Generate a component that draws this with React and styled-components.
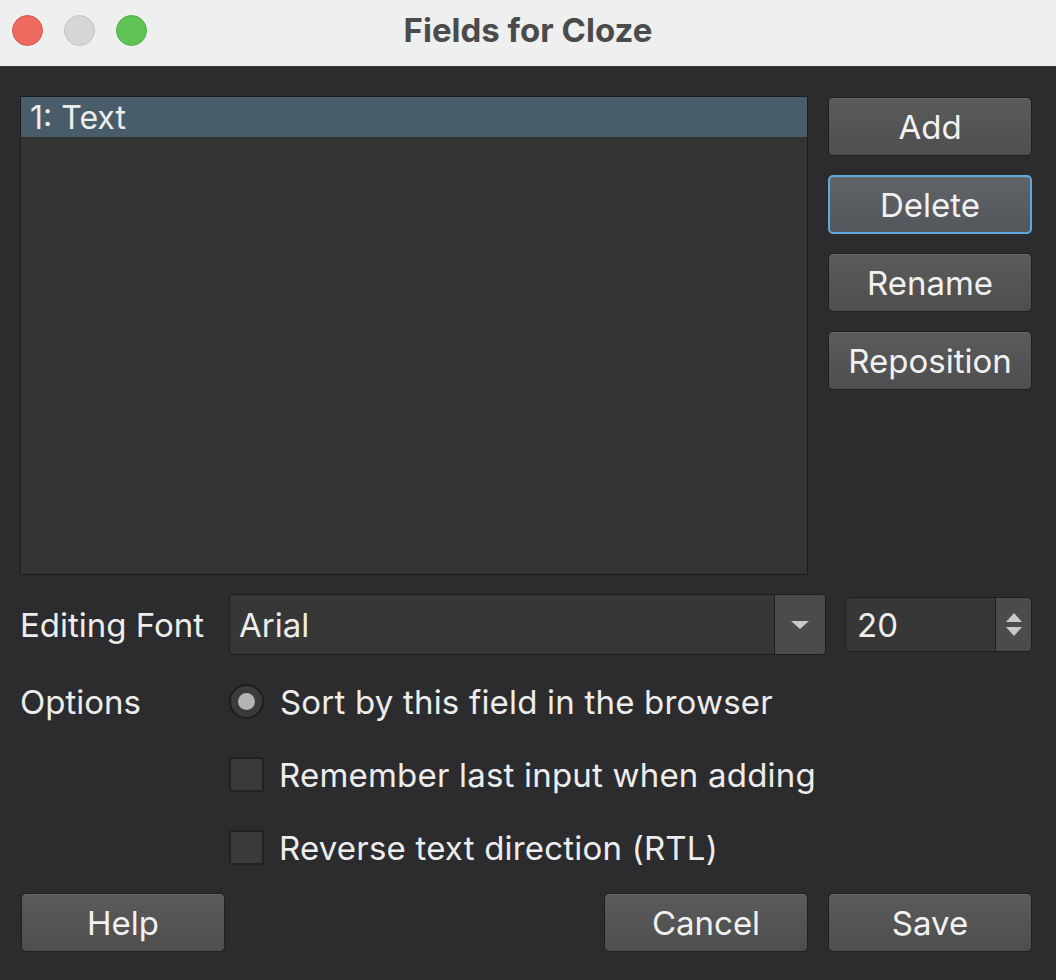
import styled, { createGlobalStyle } from 'styled-components';

const GlobalStyle = createGlobalStyle`
  html, body {
    margin: 0;
    padding: 0;
    background: #2c2c2e;
  }
  * {
    box-sizing: border-box;
  }
  body {
    font-family: Inter, "Open Sans", "Liberation Sans", sans-serif;
    color: #ededed;
  }
`;

const fields = ['1: Text'];
const sideActions = ['Add', 'Delete', 'Rename', 'Reposition'];
const options = [
  { kind: 'radio', label: 'Sort by this field in the browser' },
  { kind: 'check', label: 'Remember last input when adding' },
  { kind: 'check', label: 'Reverse text direction (RTL)' },
];

const App = () => {
  return (
    <Window>
      <GlobalStyle />
      <TitleBar>
        <Lights>
          <Light color="#ee6a5e" ring="#d5564b" />
          <Light color="#d6d6d6" ring="#c2c2c2" />
          <Light color="#5fc454" ring="#4fae45" />
        </Lights>
        <Title>Fields for Cloze</Title>
      </TitleBar>

      <Body>
        <TopSection>
          <FieldList>
            {fields.map((f) => (
              <FieldRow key={f} selected>
                {f}
              </FieldRow>
            ))}
          </FieldList>
          <SideButtons>
            {sideActions.map((a) => (
              <Button key={a} focused={a === 'Delete'}>
                {a}
              </Button>
            ))}
          </SideButtons>
        </TopSection>

        <FormGrid>
          <Label rowHeight={61}>Editing Font</Label>
          <FontControls>
            <Combo>
              <ComboValue>Arial</ComboValue>
              <ComboArrow>
                <svg width="22" height="12" viewBox="0 0 22 12">
                  <path d="M2 2 L20 2 L11 10 Z" fill="#c9c9c9" />
                </svg>
              </ComboArrow>
            </Combo>
            <Spin>
              <SpinValue>20</SpinValue>
              <SpinArrows>
                <svg width="20" height="12" viewBox="0 0 20 12">
                  <path d="M2 11 L18 11 L10 2 Z" fill="#c9c9c9" />
                </svg>
                <svg width="20" height="12" viewBox="0 0 20 12">
                  <path d="M2 1 L18 1 L10 10 Z" fill="#c9c9c9" />
                </svg>
              </SpinArrows>
            </Spin>
          </FontControls>

          <Label rowHeight={73}>Options</Label>
          <OptionList>
            {options.map((o) => (
              <OptionRow key={o.label}>
                {o.kind === 'radio' ? (
                  <Radio>
                    <RadioDot />
                  </Radio>
                ) : (
                  <Checkbox />
                )}
                <OptionText>{o.label}</OptionText>
              </OptionRow>
            ))}
          </OptionList>
        </FormGrid>

        <Footer>
          <Button>Help</Button>
          <FooterRight>
            <Button>Cancel</Button>
            <Button>Save</Button>
          </FooterRight>
        </Footer>
      </Body>
    </Window>
  );
};

const Window = styled.div`
  width: 1056px;
  height: 980px;
  display: flex;
  flex-direction: column;
  background: #2c2c2e;
`;

const TitleBar = styled.div`
  position: relative;
  height: 67px;
  flex-shrink: 0;
  background: #eeefef;
  border-bottom: 1px solid #3c3c3c;
  display: flex;
  align-items: center;
  justify-content: center;
`;

const Lights = styled.div`
  position: absolute;
  left: 12px;
  top: 15px;
  display: flex;
  gap: 21px;
`;

const Light = styled.span`
  width: 31px;
  height: 31px;
  border-radius: 50%;
  background: ${(p) => p.color};
  border: 1px solid ${(p) => p.ring};
`;

const Title = styled.div`
  font-size: 33px;
  font-weight: 700;
  color: #4b4b4b;
  margin-left: 0;
  margin-top: -7px;
  font-family: Inter, "Open Sans", "Liberation Sans", sans-serif;
`;

const Body = styled.div`
  flex: 1;
  padding: 29px 24px 0 20px;
  display: flex;
  flex-direction: column;
`;

const TopSection = styled.div`
  display: grid;
  grid-template-columns: 788px 1fr;
  gap: 20px;
  height: 479px;
`;

const FieldList = styled.div`
  background: #333334;
  border: 1px solid #1d1d1e;
  display: flex;
  flex-direction: column;
`;

const FieldRow = styled.div`
  height: 40px;
  padding-left: 9px;
  display: flex;
  align-items: center;
  font-size: 32px;
  background: ${(p) => (p.selected ? '#495c6a' : 'transparent')};
`;

const SideButtons = styled.div`
  display: flex;
  flex-direction: column;
  gap: 19px;
  padding-top: 1px;
`;

const Button = styled.button`
  width: 204px;
  height: 59px;
  border-radius: 5px;
  border: ${(p) => (p.focused ? '2px solid #5ea9dc' : '1px solid #1f1f20')};
  background: ${(p) =>
    p.focused
      ? 'linear-gradient(#606468, #52575c)'
      : 'linear-gradient(#5b5b5b, #4e4e4e)'};
  box-shadow: inset 0 1px 0 rgba(255, 255, 255, 0.08);
  color: #f1f1f1;
  font-family: inherit;
  font-size: 33px;
  padding: 0;
  cursor: pointer;
`;

const FormGrid = styled.div`
  display: grid;
  grid-template-columns: 209px 1fr;
  row-gap: 10px;
  margin-top: 19px;
  align-items: start;
`;

const Label = styled.div`
  font-size: 33px;
  height: ${(p) => p.rowHeight}px;
  display: flex;
  align-items: center;
`;

const FontControls = styled.div`
  display: flex;
  align-items: center;
  gap: 19px;
  height: 61px;
`;

const Combo = styled.div`
  flex: 1;
  height: 61px;
  display: flex;
  background: #373737;
  border: 1px solid #1e1e1f;
  border-radius: 5px;
  overflow: hidden;
`;

const ComboValue = styled.div`
  flex: 1;
  display: flex;
  align-items: center;
  padding-left: 9px;
  font-size: 33px;
`;

const ComboArrow = styled.div`
  width: 51px;
  background: #4b4b4b;
  border-left: 1px solid #1e1e1f;
  display: flex;
  align-items: center;
  justify-content: center;
`;

const Spin = styled.div`
  width: 187px;
  height: 55px;
  display: flex;
  background: #373737;
  border: 1px solid #1e1e1f;
  border-radius: 5px;
  overflow: hidden;
`;

const SpinValue = styled.div`
  flex: 1;
  display: flex;
  align-items: center;
  padding-left: 11px;
  font-size: 33px;
`;

const SpinArrows = styled.div`
  width: 36px;
  background: #4b4b4b;
  border-left: 1px solid #1e1e1f;
  display: flex;
  flex-direction: column;
  align-items: center;
  justify-content: center;
  gap: 3px;
`;

const OptionList = styled.div`
  display: flex;
  flex-direction: column;
`;

const OptionRow = styled.div`
  height: 73px;
  display: flex;
  align-items: center;
  gap: 15px;
`;

const Radio = styled.span`
  width: 35px;
  height: 35px;
  border-radius: 50%;
  background: #3b3b3b;
  border: 2px solid #1e1e1f;
  display: flex;
  align-items: center;
  justify-content: center;
  margin-right: 1px;
`;

const RadioDot = styled.span`
  width: 17px;
  height: 17px;
  border-radius: 50%;
  background: #b4b4b4;
`;

const Checkbox = styled.span`
  width: 35px;
  height: 35px;
  border-radius: 3px;
  background: #3a3a3a;
  border: 2px solid #222223;
`;

const OptionText = styled.span`
  font-size: 33px;
  letter-spacing: 0.2px;
`;

const Footer = styled.div`
  display: flex;
  justify-content: space-between;
  margin-top: 9px;
  padding-left: 1px;
`;

const FooterRight = styled.div`
  display: flex;
  gap: 20px;
`;

export default App;
